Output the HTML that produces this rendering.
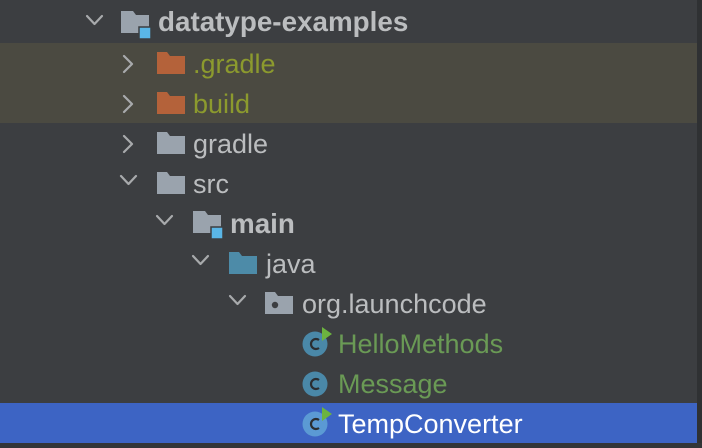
<!DOCTYPE html><html><head><style>
html,body{margin:0;padding:0}
body{width:702px;height:448px;background:#3c3e41;position:relative;overflow:hidden;font-family:"Liberation Sans",sans-serif}
.band{position:absolute;left:0;width:697px;height:80px;top:43px;background:#4b4a41}
.sel{position:absolute;left:0;width:697px;top:403px;height:40px;background:#3d64c4}
.rb{position:absolute;right:0;top:0;width:5px;height:448px;background:#2f3133}
.bot{position:absolute;left:0;top:443px;width:702px;height:5px;background:#333537}
.t{position:absolute;font-size:27px;line-height:40px;height:40px;color:#bbbdbf;white-space:nowrap}
svg{position:absolute}
</style></head><body>
<div class="band"></div><div class="sel"></div><div class="rb"></div><div class="bot"></div>
<svg width="702" height="448" style="left:0;top:0">
<g fill="none" stroke="#a8aaac" stroke-width="2.2" stroke-linecap="round" stroke-linejoin="round">
<path d="M87 16l7.5 8 7.5-8"/>
<path d="M124 56l8 8-8 8"/>
<path d="M124 96l8 8-8 8"/>
<path d="M124 136l8 8-8 8"/>
<path d="M121 176l7.5 8 7.5-8"/>
<path d="M157 216l7.5 8 7.5-8"/>
<path d="M193 256l7.5 8 7.5-8"/>
<path d="M230 296l7.5 8 7.5-8"/>
</g>
<path d="M121 11h12l3 4h13v18h-28z" fill="#9aa3ad"/><rect x="139" y="27" width="12" height="12" fill="#5ab6e6" stroke="#3c3e41" stroke-width="1.5"/>
<path d="M157 52h10l3 4h15v18h-28z" fill="#b4623a"/>
<path d="M157 92h10l3 4h15v18h-28z" fill="#b4623a"/>
<path d="M157 132h10l3 4h15v18h-28z" fill="#9aa3ad"/>
<path d="M157 172h10l3 4h15v18h-28z" fill="#9aa3ad"/>
<path d="M193 211h12l3 4h13v18h-28z" fill="#9aa3ad"/><rect x="211" y="227" width="12" height="12" fill="#5ab6e6" stroke="#3c3e41" stroke-width="1.5"/>
<path d="M229 252h10l3 4h15v18h-28z" fill="#4d8ba8"/>
<path d="M265 292h10l3 4h15v18h-28z" fill="#9aa3ad"/><circle cx="275" cy="305" r="3.2" fill="#3c3e41"/>
<g>
<circle cx="315" cy="344" r="12.5" fill="#4a88a8"/><path d="M319 340a5 5 0 1 0 0 8" fill="none" stroke="#2b2d30" stroke-width="2.2"/><path d="M322 327l10 7-10 7z" fill="#6cb33f"/>
<circle cx="315" cy="384" r="12.5" fill="#4a88a8"/><path d="M319 380a5 5 0 1 0 0 8" fill="none" stroke="#2b2d30" stroke-width="2.2"/>
<circle cx="315" cy="424" r="12.5" fill="#5b9ad4"/><path d="M319 420a5 5 0 1 0 0 8" fill="none" stroke="#2b2d30" stroke-width="2.2"/><path d="M322 407l10 7-10 7z" fill="#6cb33f"/>
</g>
</svg>
<div class="t" style="left:158px;top:2px;font-weight:bold;font-size:27.8px">datatype-examples</div>
<div class="t" style="left:193px;top:44px;color:#8c9a2e">.gradle</div>
<div class="t" style="left:193px;top:84px;color:#8c9a2e">build</div>
<div class="t" style="left:193px;top:124px">gradle</div>
<div class="t" style="left:193px;top:164px">src</div>
<div class="t" style="left:230px;top:204px;font-weight:bold;font-size:27.8px">main</div>
<div class="t" style="left:266px;top:244px">java</div>
<div class="t" style="left:302px;top:284px">org.launchcode</div>
<div class="t" style="left:338px;top:324px;color:#6a9a55">HelloMethods</div>
<div class="t" style="left:338px;top:364px;color:#6a9a55">Message</div>
<div class="t" style="left:338px;top:404px;color:#fff">TempConverter</div>
</body></html>
